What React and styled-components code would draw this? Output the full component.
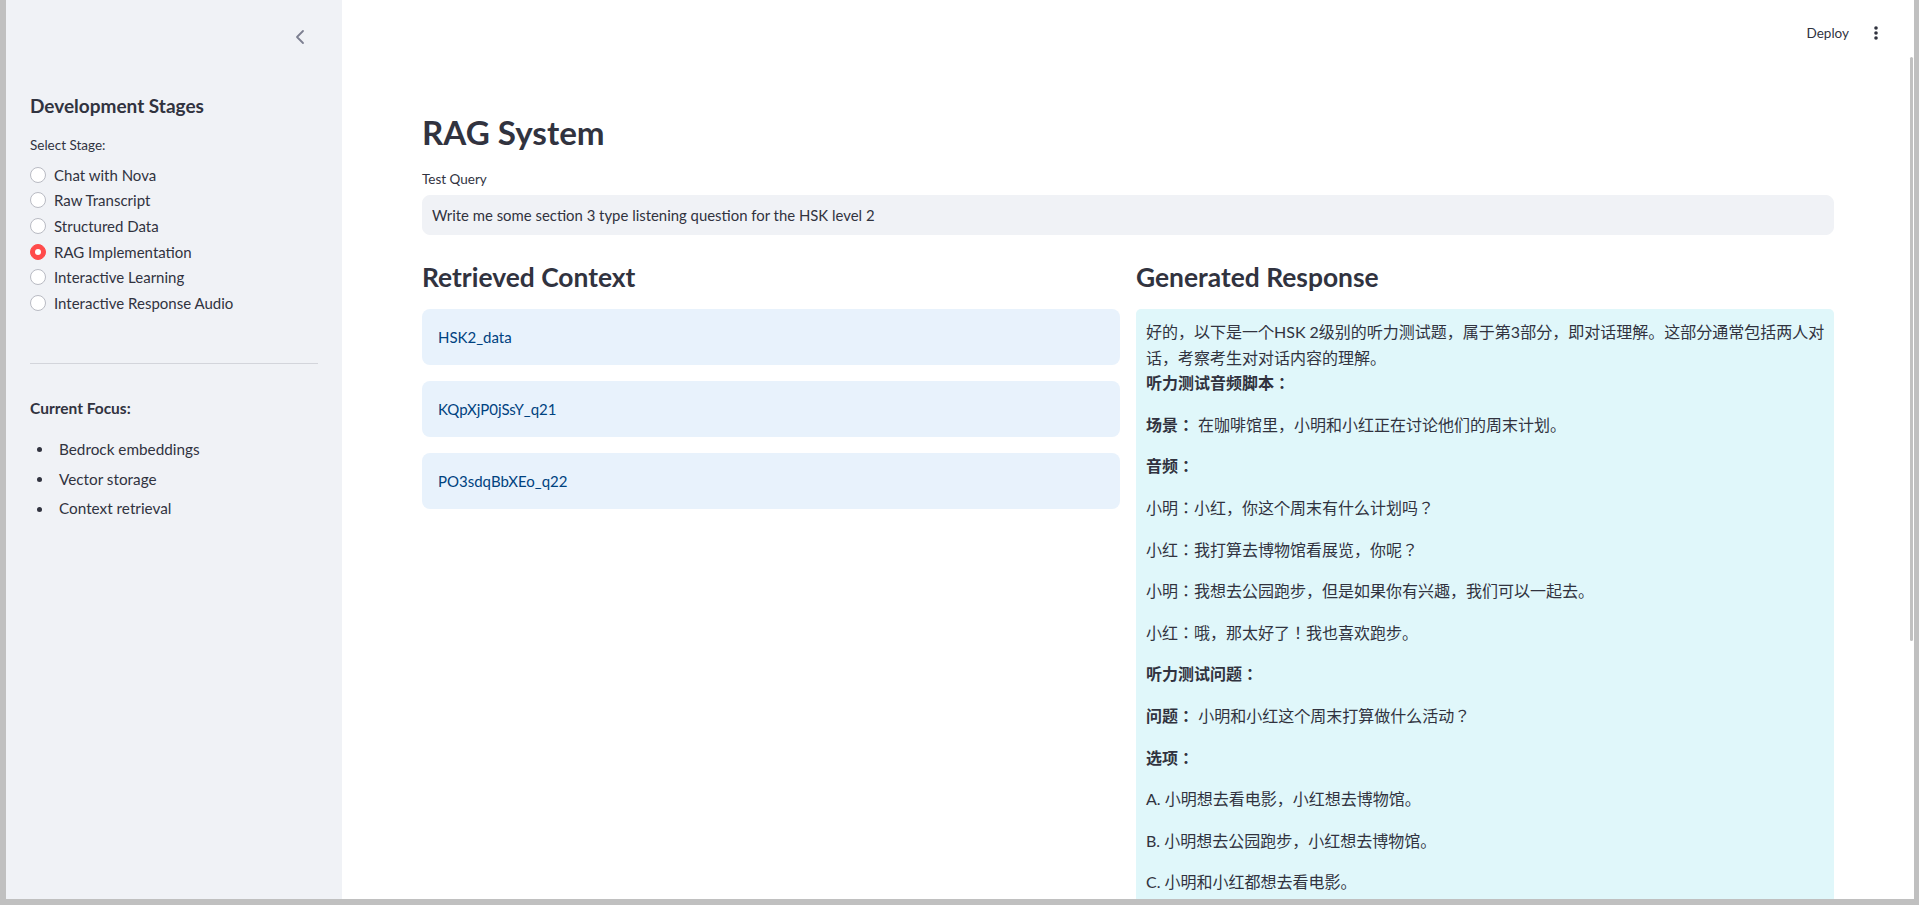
import React from 'react';
import styled, { createGlobalStyle } from 'styled-components';
import { ChevronLeft } from 'lucide-react';

const GlobalStyle = createGlobalStyle`
  html, body {
    margin: 0;
    padding: 0;
    height: 100%;
    overflow: hidden;
    background: #c0c0c0;
  }
  body {
    font-family: "Lato", "Noto Sans CJK JP", sans-serif;
    color: #31333f;
  }
  * {
    box-sizing: border-box;
  }
`;

const Frame = styled.div`
  display: flex;
  height: 905px;
  padding: 0 5px 6px 6px;
  background: #c0c0c0;
`;

const Sidebar = styled.aside`
  width: 336px;
  flex-shrink: 0;
  background: #f0f2f6;
  padding: 0 24px;
`;

const SideTop = styled.div`
  height: 74px;
  display: flex;
  align-items: center;
  justify-content: flex-end;
  margin-right: 6px;
  color: #7d8091;
`;

const SideTitle = styled.h3`
  margin: 20px 0 0;
  font-size: 19px;
  line-height: 24px;
  font-weight: 700;
`;

const FieldLabel = styled.div`
  font-size: 13.5px;
  line-height: 21px;
  margin-top: ${p => p.$top || 0}px;
`;

const RadioList = styled.div`
  margin-top: 6px;
  display: flex;
  flex-direction: column;
`;

const RadioRow = styled.label`
  display: flex;
  align-items: center;
  gap: 8px;
  height: 25.6px;
  font-size: 15px;
`;

const RadioDot = styled.span`
  width: 16px;
  height: 16px;
  border-radius: 50%;
  flex-shrink: 0;
  display: flex;
  align-items: center;
  justify-content: center;
  background: ${p => (p.$on ? '#ff4b4b' : '#fff')};
  border: 1px solid ${p => (p.$on ? '#ff4b4b' : '#b9bbc3')};
  &::after {
    content: '';
    width: 6px;
    height: 6px;
    border-radius: 50%;
    background: ${p => (p.$on ? '#fff' : 'transparent')};
  }
`;

const Divider = styled.hr`
  margin: 47px 0 0;
  border: none;
  border-top: 1px solid #d3d5db;
`;

const FocusTitle = styled.div`
  margin-top: 32px;
  font-size: 15.5px;
  line-height: 25.6px;
  font-weight: 700;
`;

const FocusList = styled.ul`
  list-style: none;
  margin: 16px 0 0;
  padding: 0;
`;

const FocusItem = styled.li`
  display: flex;
  align-items: center;
  font-size: 15.3px;
  line-height: 25.6px;
  margin-bottom: 4px;
  &::before {
    content: '';
    width: 5px;
    height: 5px;
    border-radius: 50%;
    background: #31333f;
    margin: 0 17px 0 7px;
  }
`;

const Main = styled.main`
  flex: 1;
  background: #fff;
  position: relative;
  overflow: hidden;
`;

const Header = styled.header`
  height: 66px;
  display: flex;
  align-items: center;
  justify-content: flex-end;
  padding-right: 36px;
  gap: 25px;
`;

const DeployBtn = styled.span`
  font-size: 13.5px;
  color: #31333f;
`;

const Kebab = styled.svg`
  display: block;
`;

const Block = styled.div`
  padding: 0 80px;
`;

const Title = styled.h1`
  margin: 42px 0 0;
  font-size: 33.2px;
  line-height: 48px;
  font-weight: 700;
`;

const QueryInput = styled.input`
  display: block;
  width: 100%;
  height: 40px;
  margin-top: 5px;
  padding: 0 9px;
  border: 1px solid #f0f2f6;
  border-radius: 8px;
  background: #f0f2f6;
  font: inherit;
  font-size: 14.9px;
  color: #31333f;
  outline: none;
`;

const Columns = styled.div`
  display: grid;
  grid-template-columns: 1fr 1fr;
  gap: 16px;
  margin-top: 25px;
  align-items: start;
`;

const SubHeader = styled.h3`
  margin: 0 0 15px;
  font-size: 26.4px;
  line-height: 34px;
  font-weight: 700;
`;

const InfoBox = styled.div`
  height: 56px;
  display: flex;
  align-items: center;
  padding: 0 16px;
  margin-bottom: 16px;
  border-radius: 8px;
  background: #e8f2fc;
  color: #004280;
  font-size: 15px;
`;

const ResponseBox = styled.div`
  background: #e0f7fa;
  border-radius: 5px;
  padding: 10px 2px 10px 10px;
  font-size: 16px;
  line-height: 25.6px;
`;

const Para = styled.p`
  margin: 0 0 16px;
`;

const Thumb = styled.div`
  position: absolute;
  right: 1px;
  top: 57px;
  width: 3px;
  height: 584px;
  background: #c1c1c1;
  border-radius: 2px;
`;

const stages = [
  'Chat with Nova',
  'Raw Transcript',
  'Structured Data',
  'RAG Implementation',
  'Interactive Learning',
  'Interactive Response Audio',
];

const focus = ['Bedrock embeddings', 'Vector storage', 'Context retrieval'];

const contexts = ['HSK2_data', 'KQpXjP0jSsY_q21', 'PO3sdqBbXEo_q22'];

const lines = [
  ['', '小明：小红，你这个周末有什么计划吗？'],
  ['', '小红：我打算去博物馆看展览，你呢？'],
  ['', '小明：我想去公园跑步，但是如果你有兴趣，我们可以一起去。'],
  ['', '小红：哦，那太好了！我也喜欢跑步。'],
  ['听力测试问题：', ''],
  ['问题：', '小明和小红这个周末打算做什么活动？'],
  ['选项：', ''],
  ['', 'A. 小明想去看电影，小红想去博物馆。'],
  ['', 'B. 小明想去公园跑步，小红想去博物馆。'],
  ['', 'C. 小明和小红都想去看电影。'],
  ['', 'D. 小明和小红都想去公园跑步。'],
  ['正确答案：', 'D'],
];

export default function App() {
  return (
    <>
      <GlobalStyle />
      <Frame>
        <Sidebar>
          <SideTop>
            <ChevronLeft size={24} strokeWidth={1.8} />
          </SideTop>
          <SideTitle>Development Stages</SideTitle>
          <FieldLabel $top={17}>Select Stage:</FieldLabel>
          <RadioList>
            {stages.map(s => (
              <RadioRow key={s}>
                <RadioDot $on={s === 'RAG Implementation'} />
                {s}
              </RadioRow>
            ))}
          </RadioList>
          <Divider />
          <FocusTitle>Current Focus:</FocusTitle>
          <FocusList>
            {focus.map(f => (
              <FocusItem key={f}>{f}</FocusItem>
            ))}
          </FocusList>
        </Sidebar>
        <Main>
          <Header>
            <DeployBtn>Deploy</DeployBtn>
            <Kebab width="4" height="16" viewBox="0 0 4 16">
              <circle cx="2" cy="3" r="1.8" fill="#31333f" />
              <circle cx="2" cy="8" r="1.8" fill="#31333f" />
              <circle cx="2" cy="13" r="1.8" fill="#31333f" />
            </Kebab>
          </Header>
          <Block>
            <Title>RAG System</Title>
            <FieldLabel $top={13}>Test Query</FieldLabel>
            <QueryInput
              defaultValue="Write me some section 3 type listening question for the HSK level 2"
            />
            <Columns>
              <div>
                <SubHeader>Retrieved Context</SubHeader>
                {contexts.map(c => (
                  <InfoBox key={c}>{c}</InfoBox>
                ))}
              </div>
              <div>
                <SubHeader>Generated Response</SubHeader>
                <ResponseBox>
                  <Para>
                    好的，以下是一个HSK 2级别的听力测试题，属于第3部分，即对话理解。这部分通常包括两人对话，考察考生对对话内容的理解。
                    <br />
                    <strong>听力测试音频脚本：</strong>
                  </Para>
                  <Para>
                    <strong>场景：</strong> 在咖啡馆里，小明和小红正在讨论他们的周末计划。
                  </Para>
                  <Para>
                    <strong>音频：</strong>
                  </Para>
                  {lines.map(([b, t], i) => (
                    <Para key={i}>
                      {b && <strong>{b}</strong>}
                      {b && t ? ' ' : ''}
                      {t}
                    </Para>
                  ))}
                </ResponseBox>
              </div>
            </Columns>
          </Block>
          <Thumb />
        </Main>
      </Frame>
    </>
  );
}
